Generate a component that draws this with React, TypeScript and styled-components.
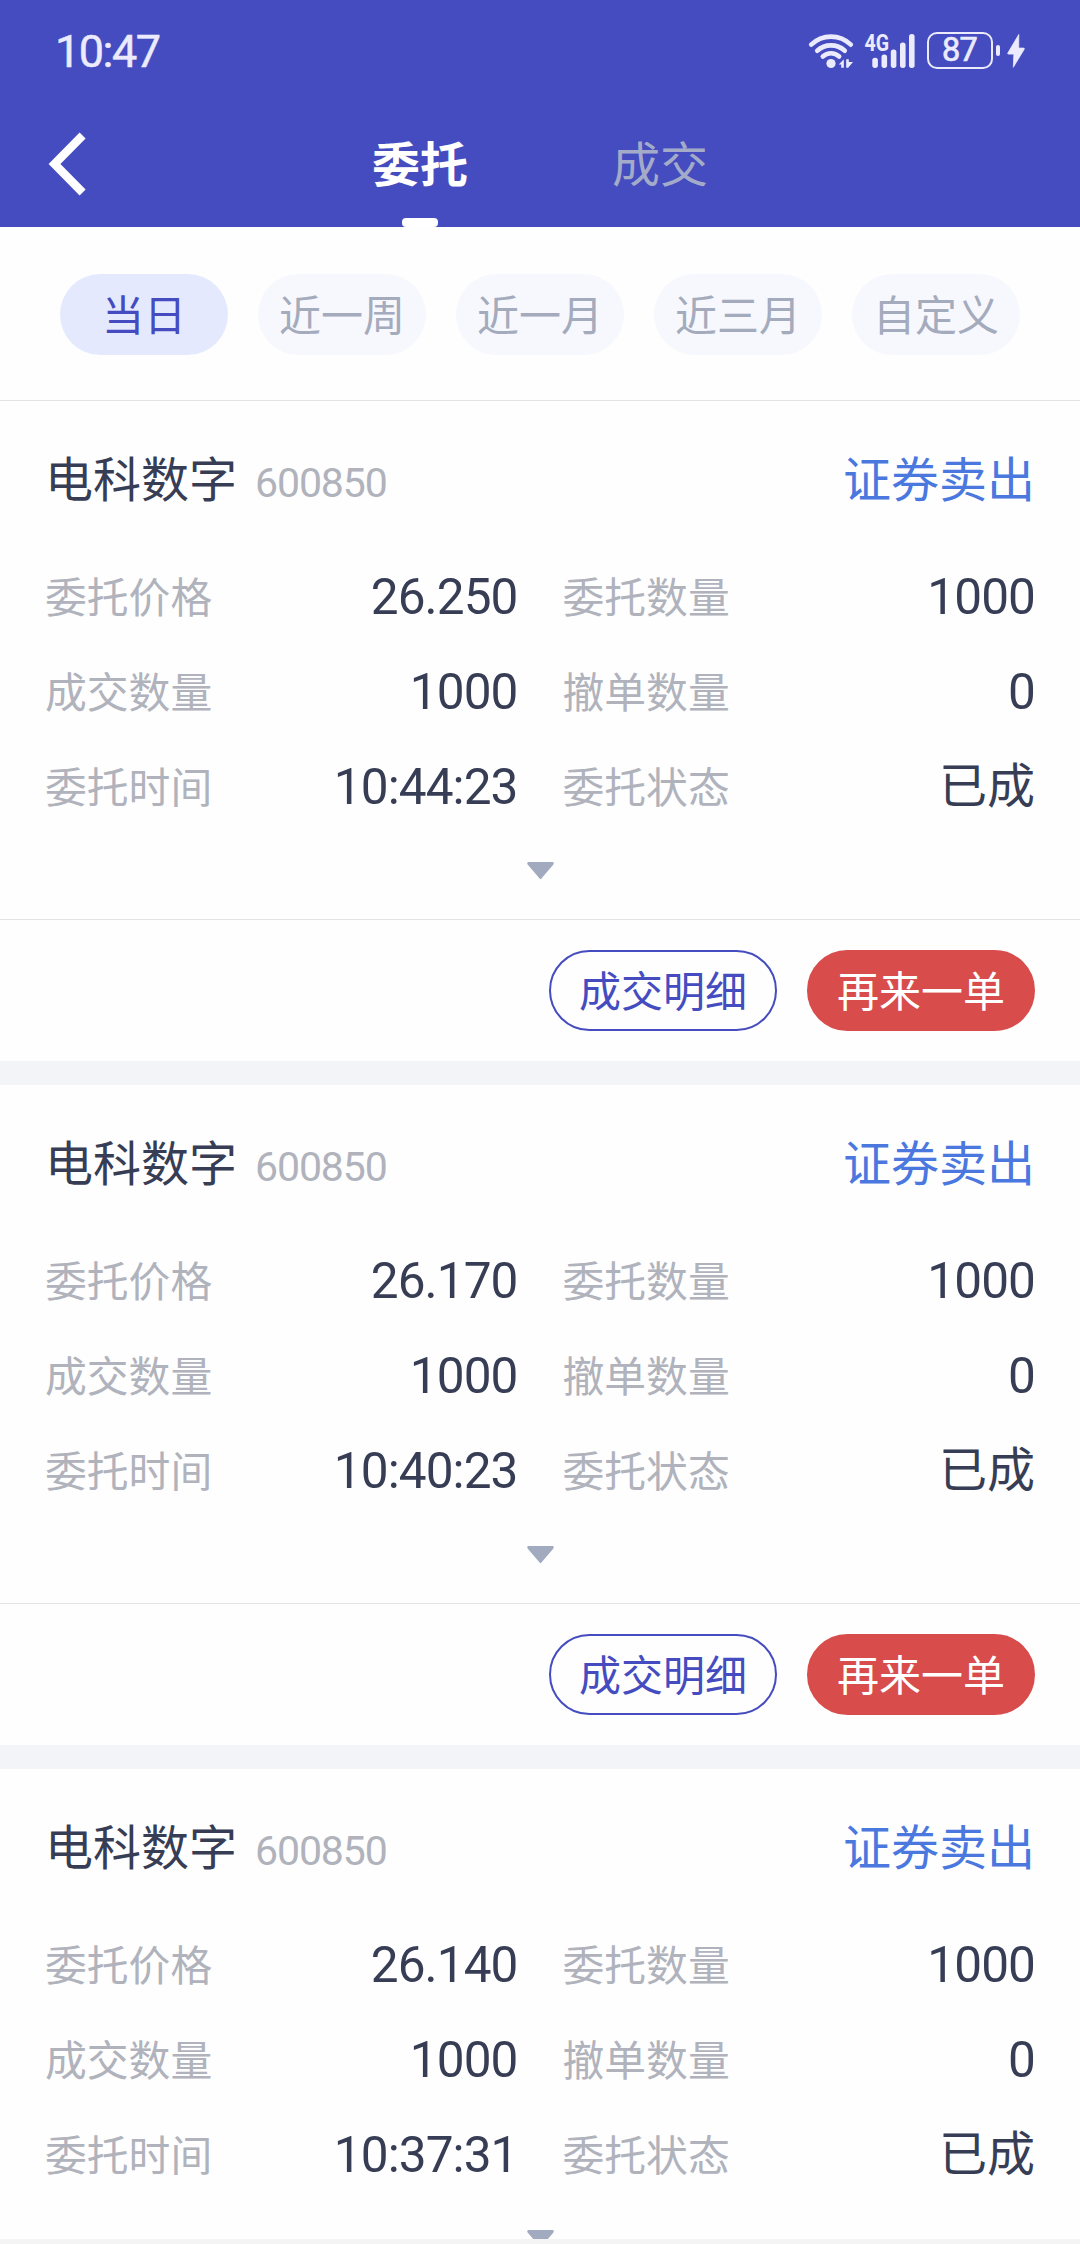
import React, { useState } from "react";
import styled, { createGlobalStyle, css } from "styled-components";

const color = {
  primary: "#454cbf",
  status: "#ebebfd",
  muted: "#a4abbc",
  label: "#b0b2bc",
  ink: "#373d54",
  sell: "#4b78df",
  danger: "#d84c4c",
  line: "#e3e4e6",
  band: "#f3f4f7",
};

const GlobalStyle = createGlobalStyle`
  * { box-sizing: border-box; }
  body {
    margin: 0;
    background: #ffffff;
    font-family: Roboto, "Noto Sans CJK SC", sans-serif;
    color: ${color.ink};
  }
`;

const Screen = styled.div`
  width: 1080px;
  height: 2244px;
  display: flex;
  flex-direction: column;
  overflow: hidden;
  background: #fefefe;
`;

const Header = styled.header`
  flex: none;
  height: 227px;
  background: ${color.primary};
`;

const StatusBar = styled.div`
  height: 101px;
  padding: 0 55px;
  display: flex;
  align-items: center;
  justify-content: space-between;
  color: ${color.status};
`;

const Clock = styled.span`
  padding-top: 2px;
  font-size: 45px;
  line-height: 60px;
  letter-spacing: -1.5px;
  -webkit-text-stroke: 0.5px ${color.status};
`;

const StatusIcons = styled.div`
  display: flex;
  align-items: center;
  color: ${color.status};

  svg {
    display: block;
    flex: none;
    overflow: visible;
  }
`;

const Battery = styled.span`
  width: 66px;
  height: 37px;
  margin-left: 11px;
  padding-right: 1px;
  border: 2.5px solid ${color.status};
  border-radius: 10px;
  display: flex;
  align-items: center;
  justify-content: center;
  font-size: 32.5px;
  line-height: 33px;
  letter-spacing: -0.8px;
  -webkit-text-stroke: 0.7px ${color.status};
`;

const BatteryNub = styled.span`
  width: 4px;
  height: 11px;
  margin: 0 7px 0 3px;
  border-radius: 2px;
  background: ${color.status};
`;

const NavBar = styled.nav`
  height: 126px;
  display: grid;
  grid-template-columns: 300px 240px 240px 300px;
`;

const BackButton = styled.button`
  padding: 0 0 0 47px;
  border: 0;
  background: none;
  display: flex;
  align-items: center;
`;

const Tab = styled.button<{ $active: boolean }>`
  padding: 13px 0 0;
  border: 0;
  background: none;
  display: flex;
  flex-direction: column;
  align-items: center;
  justify-content: space-between;
  font-family: inherit;
  font-size: 48px;
  line-height: 104px;
  font-weight: ${(p) => (p.$active ? 700 : 400)};
  color: ${(p) => (p.$active ? "#ffffff" : "#a3abc9")};
`;

const TabMark = styled.span<{ $active: boolean }>`
  width: 36px;
  height: 9px;
  border-radius: 4px;
  background: ${(p) => (p.$active ? "#ffffff" : "transparent")};
`;

const Filters = styled.div`
  flex: none;
  height: 174px;
  padding: 47px 60px 0;
  display: flex;
  gap: 30px;
  border-bottom: 1px solid ${color.line};
`;

const Chip = styled.button<{ $active: boolean }>`
  width: 168px;
  height: 81px;
  padding: 4px 0 0;
  border: 0;
  border-radius: 41px;
  font-family: inherit;
  font-size: 42px;
  line-height: 77px;
  white-space: nowrap;
  background: ${(p) => (p.$active ? "#e5e9fe" : "#f7f8fd")};
  color: ${(p) => (p.$active ? color.primary : color.muted)};
`;

const OrderList = styled.main`
  flex: 1;
  min-height: 0;
  overflow: hidden;
`;

const Card = styled.article`
  height: 684px;
  display: flex;
  flex-direction: column;
  border-bottom: 24px solid ${color.band};
`;

const CardHead = styled.div`
  height: 148px;
  padding: 11px 45px 0;
  display: flex;
  align-items: center;
`;

const StockName = styled.span`
  font-size: 48px;
  line-height: 70px;
`;

const StockCode = styled.span`
  margin: 5px auto 0 18px;
  font-size: 41px;
  line-height: 60px;
  letter-spacing: -1.1px;
  color: ${color.label};
`;

const Side = styled.span`
  font-size: 48px;
  line-height: 70px;
  color: ${color.sell};
`;

const Fields = styled.dl`
  margin: 0;
  padding: 0 45px;
  display: grid;
  grid-template-columns: 1fr 1fr;
  grid-auto-rows: 95px;
  column-gap: 45px;
`;

const Field = styled.div`
  display: flex;
  align-items: center;
  justify-content: space-between;
`;

const FieldName = styled.dt`
  padding-top: 4px;
  font-size: 41.8px;
  line-height: 60px;
  color: ${color.label};
`;

const FieldValue = styled.dd<{ $text?: boolean }>`
  margin: 0;
  font-size: 49.5px;
  line-height: 70px;
  letter-spacing: -0.9px;
  ${(p) =>
    p.$text &&
    css`
      font-size: 48px;
      letter-spacing: 0;
    `}
`;

const Expand = styled.div`
  height: 85px;
  padding-top: 28px;
  display: flex;
  justify-content: center;
  align-items: flex-start;
`;

const Actions = styled.div`
  flex: 1;
  border-top: 1px solid ${color.line};
  padding: 0 45px;
  display: flex;
  align-items: center;
  justify-content: flex-end;
  gap: 30px;
`;

const ActionButton = styled.button<{ $filled?: boolean }>`
  width: 228px;
  height: 81px;
  padding: 4px 0 0;
  border: 2px solid ${(p) => (p.$filled ? color.danger : color.primary)};
  border-radius: 41px;
  background: ${(p) => (p.$filled ? color.danger : "transparent")};
  color: ${(p) => (p.$filled ? "#ffffff" : color.primary)};
  font-family: inherit;
  font-size: 42px;
  line-height: 73px;
`;

const BottomInset = styled.div`
  flex: none;
  height: 5px;
  background: #f4f4f5;
`;

const WifiIcon = () => (
  <svg width="46" height="36" viewBox="808 32.5 46 36" fill="none">
    <g stroke="currentColor" strokeWidth="4.6" strokeLinecap="round">
      <path d="M811.2 44.2A28.2 28.2 0 0 1 850.8 44.2" />
      <path d="M817.2 50.2A20.5 20.5 0 0 1 844.8 50.2" />
      <path d="M822.8 56A12 12 0 0 1 839.2 56" />
    </g>
    <g fill="currentColor">
      <circle cx="831" cy="63" r="4.6" />
      <path d="M838.8 64L843.8 58.7V67.3H841.2V64Z" />
      <path d="M846.2 58.7H848.8V61.6H853L848.2 67.3H846.2Z" />
    </g>
  </svg>
);

const SignalIcon = () => (
  <svg width="52" height="36" viewBox="864 32.5 52 36" fill="currentColor">
    <text
      x="864.6"
      y="50.7"
      fontSize="23.5"
      fontWeight="700"
      fontFamily="Roboto, sans-serif"
      textLength="24.6"
      lengthAdjust="spacingAndGlyphs"
    >
      4G
    </text>
    <rect x="872.3" y="57.2" width="5.6" height="10.2" rx="2.6" />
    <rect x="881.5" y="54" width="5.6" height="13.4" rx="2.6" />
    <rect x="890.8" y="49" width="5.6" height="18.4" rx="2.6" />
    <rect x="900" y="42" width="5.6" height="25.4" rx="2.6" />
    <rect x="909" y="33.6" width="5.6" height="33.8" rx="2.6" />
  </svg>
);

const BoltIcon = () => (
  <svg width="18" height="36" viewBox="1006.5 32.5 18 36">
    <path
      d="M1018.3 34L1007.3 52.6Q1007 53.6 1008 53.6H1013.4L1012.8 66.8L1023.8 48.6Q1024 47.6 1023 47.6H1018.2Z"
      fill="currentColor"
      stroke="currentColor"
      strokeWidth="0.8"
      strokeLinejoin="round"
    />
  </svg>
);

const IconGap = styled.span`
  width: 10px;
`;

const BackIcon = () => (
  <svg width="40" height="64" viewBox="48 132 40 64" fill="none">
    <path d="M83.6 135.5L55.5 164L83.6 192.5" stroke="#ffffff" strokeWidth="8.4" />
  </svg>
);

const CaretIcon = () => (
  <svg width="27" height="18" viewBox="0 0 27 18">
    <path
      d="M1.2 0H25.8Q27.4 0.6 26.4 2.4L14.4 16.6Q13.5 17.8 12.6 16.6L0.6 2.4Q-0.4 0.6 1.2 0Z"
      fill="#a1aabe"
    />
  </svg>
);

type Order = { price: string; time: string; actions: boolean };

const orders: Order[] = [
  { price: "26.250", time: "10:44:23", actions: true },
  { price: "26.170", time: "10:40:23", actions: true },
  { price: "26.140", time: "10:37:31", actions: false },
];

const ranges = ["当日", "近一周", "近一月", "近三月", "自定义"];
const tabs = ["委托", "成交"];

const OrderCard = ({ order }: { order: Order }) => (
  <Card>
    <CardHead>
      <StockName>电科数字</StockName>
      <StockCode>600850</StockCode>
      <Side>证券卖出</Side>
    </CardHead>
    <Fields>
      <Field>
        <FieldName>委托价格</FieldName>
        <FieldValue>{order.price}</FieldValue>
      </Field>
      <Field>
        <FieldName>委托数量</FieldName>
        <FieldValue>1000</FieldValue>
      </Field>
      <Field>
        <FieldName>成交数量</FieldName>
        <FieldValue>1000</FieldValue>
      </Field>
      <Field>
        <FieldName>撤单数量</FieldName>
        <FieldValue>0</FieldValue>
      </Field>
      <Field>
        <FieldName>委托时间</FieldName>
        <FieldValue>{order.time}</FieldValue>
      </Field>
      <Field>
        <FieldName>委托状态</FieldName>
        <FieldValue $text>已成</FieldValue>
      </Field>
    </Fields>
    <Expand>
      <CaretIcon />
    </Expand>
    {order.actions && (
      <Actions>
        <ActionButton>成交明细</ActionButton>
        <ActionButton $filled>再来一单</ActionButton>
      </Actions>
    )}
  </Card>
);

export default function App() {
  const [tab, setTab] = useState(0);
  const [range, setRange] = useState(0);

  return (
    <>
      <GlobalStyle />
      <Screen>
        <Header>
          <StatusBar>
            <Clock>10:47</Clock>
            <StatusIcons>
              <WifiIcon />
              <IconGap />
              <SignalIcon />
              <Battery>87</Battery>
              <BatteryNub />
              <BoltIcon />
            </StatusIcons>
          </StatusBar>
          <NavBar>
            <BackButton aria-label="返回">
              <BackIcon />
            </BackButton>
            {tabs.map((name, i) => (
              <Tab key={name} $active={i === tab} onClick={() => setTab(i)}>
                {name}
                <TabMark $active={i === tab} />
              </Tab>
            ))}
          </NavBar>
        </Header>
        <Filters>
          {ranges.map((name, i) => (
            <Chip key={name} $active={i === range} onClick={() => setRange(i)}>
              {name}
            </Chip>
          ))}
        </Filters>
        <OrderList>
          {orders.map((order) => (
            <OrderCard key={order.time} order={order} />
          ))}
        </OrderList>
        <BottomInset />
      </Screen>
    </>
  );
}
